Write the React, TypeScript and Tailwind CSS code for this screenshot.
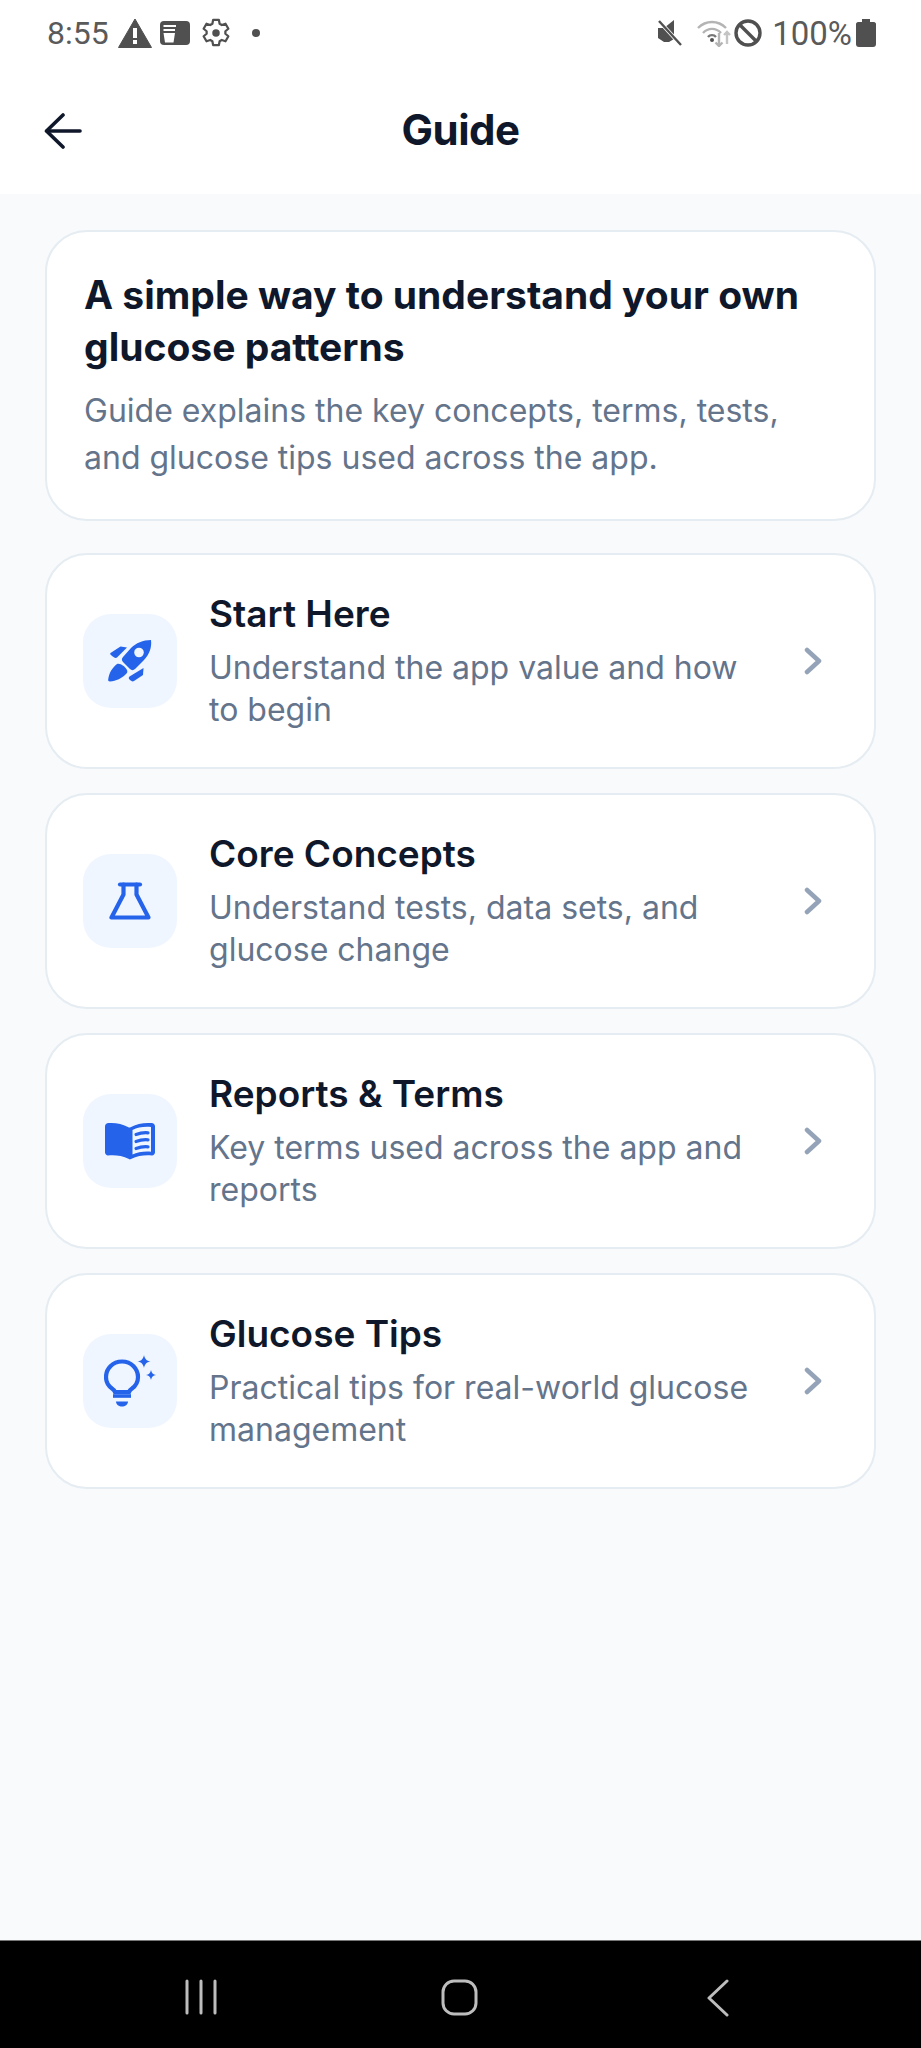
const cards = [
  { title: "Start Here", sub: ["Understand the app value and how", "to begin"], icon: "rocket" },
  { title: "Core Concepts", sub: ["Understand tests, data sets, and", "glucose change"], icon: "flask" },
  { title: "Reports & Terms", sub: ["Key terms used across the app and", "reports"], icon: "book" },
  { title: "Glucose Tips", sub: ["Practical tips for real-world glucose", "management"], icon: "bulb" },
];

function CardIcon({ name }: { name: string }) {
  const c = "#2563eb";
  if (name === "rocket")
    return (
      <svg width="46" height="46" viewBox="0 0 46 46">
        <path d="M44 2C45 9 42.500 16.500 37 22L28 31C26.500 32.500 24.500 32.500 23 31L16 24C14.500 22.500 14.500 20.500 16 19L24 10C29 5 36 2 44 2Z" fill={c} />
        <circle cx="32" cy="14.500" r="4.800" fill="#eff6ff" />
        <path d="M13.500 8.500L20 9.500L10 19.500C8.500 20.500 6.500 19.500 3.500 16.500C3 16 3 15.500 3.500 15Z" fill={c} />
        <path d="M36.500 30L36 37L27 43C25.500 44 24 43 22.500 41.500C21.500 40.500 21.500 39.500 22.500 38.500Z" fill={c} />
        <path d="M10 26C13.500 25 18 28.500 20 32C20.500 33.500 20.500 34.500 19.500 35.500C15 40.500 9 43 3 43.500C1.500 43.500 1 42.500 1.200 41.500C2 35 5 30 10 26Z" fill={c} />
      </svg>
    );
  if (name === "flask")
    return (
      <svg width="42" height="38" viewBox="0 0 42 38" fill="none" stroke={c} strokeWidth="4.200" strokeLinecap="round" strokeLinejoin="round">
        <path d="M11 2.500H31" />
        <path d="M14.500 2.500V12.500L2.500 35.500H39.500L27.500 12.500V2.500" />
      </svg>
    );
  if (name === "book")
    return (
      <svg width="50" height="38" viewBox="0 0 50 38">
        <path d="M0 4.500C0 2.500 1.500 1 3.500 1C10 0.500 17 1.500 24 5.500V37C17 33.500 10 33 3 33.500C1.500 33.500 0 32 0 30.500Z" fill={c} />
        <path fillRule="evenodd" d="M25 5.500C32 1.500 39 0.500 46.500 1C48.500 1 50 2.500 50 4.500V30.500C50 32 48.500 33.500 47 33.500C40 33 33 33.500 26 37C25 37.500 24.500 37.500 24 37V5.500ZM27.500 8V32.500C32.500 30 39 29.200 46 29.700V5C39 4.500 32.500 5.200 27.500 8Z" fill={c} />
        <path d="M31 12.500C35 11 39 10.500 43 10.800M31 19.500C35 18 39 17.500 43 17.800M31 26.500C35 25 39 24.500 43 24.800" stroke={c} strokeWidth="3.200" fill="none" strokeLinecap="round" />
      </svg>
    );
  return (
    <svg width="52" height="52" viewBox="0 0 52 52">
      <path d="M18 6.500C8.500 6.500 2 14 2 22C2 27.500 4.500 31 8 33.500C9.500 34.500 10.500 35.500 11 37H25C25.500 35.500 26.500 34.500 28 33.500C31.500 31 34 27.500 34 22C34 14 27.500 6.500 18 6.500Z" fill="none" stroke={c} strokeWidth="4.200" />
      <path d="M9 41H27" stroke={c} strokeWidth="3.600" />
      <path d="M12 46.500H24C24 49.500 21 51.500 18 51.500C15 51.500 12 49.500 12 46.500Z" fill={c} />
      <path d="M40 0C40.800 4 42.500 5.700 46.500 6.500C42.500 7.300 40.800 9 40 13C39.200 9 37.500 7.300 33.500 6.500C37.500 5.700 39.200 4 40 0Z" fill={c} />
      <path d="M47 15C47.600 18 49 19.400 52 20C49 20.600 47.600 22 47 25C46.400 22 45 20.600 42 20C45 19.400 46.400 18 47 15Z" fill={c} />
    </svg>
  );
}

function StatusLeft() {
  const g = "#505050";
  return (
    <div className="flex items-center">
      <span className="text-[32px] leading-none text-[#5a5a5a]" style={{ fontFamily: "Roboto, sans-serif" }}>8:55</span>
      <svg className="ml-[9px]" width="34" height="30" viewBox="0 0 34 30">
        <path d="M17 1L33.500 29.500H0.500Z" fill={g} stroke={g} strokeLinejoin="round" strokeWidth="1" />
        <rect x="15" y="10" width="4" height="10" fill="#fff" />
        <rect x="15" y="22" width="4" height="4" fill="#fff" />
      </svg>
      <svg className="ml-[8px]" width="30" height="26" viewBox="0 0 30 26">
        <rect x="0" y="1" width="30" height="24" rx="4" fill={g} />
        <path d="M3.500 6H16M3.500 10H15" stroke="#fff" strokeWidth="2" />
        <path d="M3.500 13H15L13.500 22.500H5Z" fill="#fff" />
      </svg>
      <svg className="ml-[11px]" width="30" height="30" viewBox="0 0 24 24" fill="none" stroke={g} strokeWidth="1.800" strokeLinejoin="round">
        <path d="M9.700 1.500h4.600l.6 3.100 1.700 1 3-1 2.300 4-2.400 2v2l2.400 2-2.300 4-3-1-1.700 1-.6 3.100H9.700l-.6-3.100-1.700-1-3 1-2.300-4 2.400-2v-2l-2.400-2 2.300-4 3 1 1.700-1z" />
        <circle cx="12" cy="12" r="3" fill={g} stroke="none" />
      </svg>
      <span className="ml-[21px] h-[8px] w-[8px] rounded-full bg-[#505050]" />
    </div>
  );
}

function StatusRight() {
  const g = "#505050";
  return (
    <div className="flex items-center">
      <svg width="26" height="28" viewBox="0 0 26 28">
        <path d="M1 9H7L17 1V20L12 23H7L1 19Z" fill={g} />
        <path d="M2 2L24 26" stroke="#fff" strokeWidth="4" />
        <path d="M2 2L24 26" stroke={g} strokeWidth="2.400" />
      </svg>
      <svg className="ml-[13px]" width="36" height="28" viewBox="0 0 34 28" fill="none" stroke="#b4b4b4" strokeWidth="2.400">
        <path d="M1 9C9 1 21 1 29 9" />
        <path d="M6 14C11 8.500 19 8.500 24 14" />
        <path d="M11 18C13 15.500 17 15.500 19 18" stroke="#777" />
        <circle cx="15" cy="21" r="2" fill={g} stroke="none" />
        <path d="M22 14V27M18.500 23.500L22 27L25.500 23.500" />
        <path d="M30 25V13M27 16L30 13L33 16" stroke="#c4c4c4" />
      </svg>
      <svg className="ml-[2px]" width="28" height="28" viewBox="0 0 28 28" fill="none" stroke={g} strokeWidth="3.400">
        <circle cx="14" cy="14" r="12" />
        <path d="M5.500 5.500L22.500 22.500" />
      </svg>
      <span className="ml-[10px] text-[33px] leading-none text-[#5a5a5a]" style={{ fontFamily: "Roboto, sans-serif" }}>100%</span>
      <svg className="ml-[4px]" width="20" height="28" viewBox="0 0 20 28">
        <path d="M6 0H14V3H18C19 3 20 4 20 5V25C20 27 19 28 17 28H3C1 28 0 27 0 25V5C0 4 1 3 2 3H6Z" fill={g} />
      </svg>
    </div>
  );
}

export default function App() {
  return (
    <div className="flex h-[2048px] w-[921px] flex-col overflow-hidden bg-[#f8fafc]" style={{ fontFamily: "Inter, sans-serif" }}>
      <div className="h-[194px] shrink-0 bg-white">
        <div className="flex h-[66px] items-center justify-between pl-[47px] pr-[45px]">
          <StatusLeft />
          <StatusRight />
        </div>
        <div className="relative flex h-[128px] items-center justify-center">
          <svg className="absolute left-[44px] top-[47px]" width="38" height="36" viewBox="0 0 38 36" fill="none" stroke="#0f172a" strokeWidth="3.600" strokeLinecap="round" strokeLinejoin="round">
            <path d="M36 18H3" />
            <path d="M19 2L2.500 18L19 34" />
          </svg>
          <span className="text-[42px] font-bold leading-none tracking-[-0.5px] text-[#0f172a]">Guide</span>
        </div>
      </div>
      <div className="flex flex-1 flex-col gap-[24px] px-[45px] pt-[36px]">
        <div className="mb-[8px] h-[291px] rounded-[42px] border-2 border-[#e5ecf2] bg-white px-[37px] pt-[37px]">
          <h1 className="text-[39px] font-bold leading-[52px] text-[#0f172a]">
            A simple way to understand your own
            <br />
            glucose patterns
          </h1>
          <p className="mt-[14px] text-[32px] leading-[47px] text-[#64748b]">
            Guide explains the key concepts, terms, tests,
            <br />
            and glucose tips used across the app.
          </p>
        </div>
        {cards.map((c) => (
          <div key={c.title} className="flex h-[216px] items-center rounded-[42px] border-2 border-[#e5ecf2] bg-white pl-[36px] pr-[52px]">
            <div className="flex h-[94px] w-[94px] shrink-0 items-center justify-center rounded-[28px] bg-[#eff6ff]">
              <CardIcon name={c.icon} />
            </div>
            <div className="ml-[32px] flex-1">
              <div className="text-[37px] font-semibold leading-[46px] text-[#0f172a]">{c.title}</div>
              <div className="mt-[10px] text-[32px] leading-[42px] text-[#64748b]">
                {c.sub[0]}
                <br />
                {c.sub[1]}
              </div>
            </div>
            <svg width="18" height="28" viewBox="0 0 18 28" fill="none" stroke="#94a3b8" strokeWidth="4.500" strokeLinecap="round" strokeLinejoin="round">
              <path d="M3 3L15 14L3 25" />
            </svg>
          </div>
        ))}
      </div>
      <div className="relative h-[108px] shrink-0 border-t border-[#777] bg-black">
        <svg className="absolute left-[184px] top-[38px]" width="34" height="36" viewBox="0 0 34 36" fill="none" stroke="#bdbdbd" strokeWidth="3" strokeLinecap="round">
          <path d="M3 2V34M17 2V34M31 2V34" />
        </svg>
        <svg className="absolute left-[441px] top-[38px]" width="37" height="37" viewBox="0 0 37 37" fill="none" stroke="#bdbdbd" strokeWidth="3">
          <rect x="2" y="2" width="33" height="33" rx="11" />
        </svg>
        <svg className="absolute left-[707px] top-[38px]" width="22" height="38" viewBox="0 0 22 38" fill="none" stroke="#bdbdbd" strokeWidth="3" strokeLinecap="round" strokeLinejoin="round">
          <path d="M20 2L2 19L20 36" />
        </svg>
      </div>
    </div>
  );
}
